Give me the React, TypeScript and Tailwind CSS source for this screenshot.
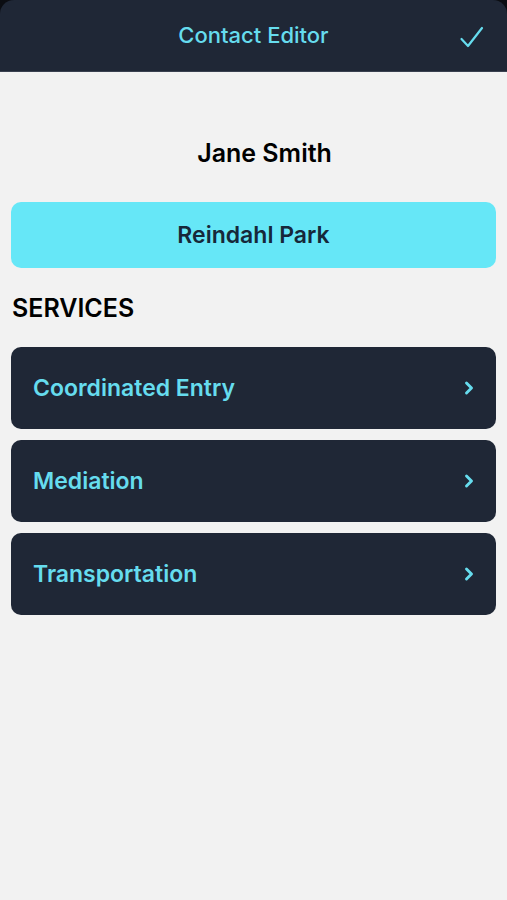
import { ChevronRight } from "lucide-react";

const services = ["Coordinated Entry", "Mediation", "Transportation"];

export default function App() {
  return (
    <div
      className="min-h-[900px] w-full bg-[#f2f2f2]"
      style={{ fontFamily: "Inter, 'Noto Sans', sans-serif" }}
    >
      <div className="bg-[#0b0d12]">
        <header className="relative flex h-[72px] items-center justify-center rounded-t-[14px] border-b border-[#3a4150] bg-[#1f2736]">
          <h1 className="text-[22px] font-medium text-[#66dcee]">Contact Editor</h1>
          <button className="absolute right-[22px] top-[25px] text-[#66dcee]">
            <svg width="26" height="26" viewBox="0 0 26 26" fill="none">
              <path
                d="M2.5 14 L9 21 L23 3"
                stroke="currentColor"
                strokeWidth="2.2"
                strokeLinecap="round"
                strokeLinejoin="round"
              />
            </svg>
          </button>
        </header>
      </div>

      <main className="flex flex-col px-[11px]">
        <div className="pl-[22px] pt-[66px] text-center text-[25px] font-semibold leading-[30px] text-black">
          Jane Smith
        </div>

        <button className="mt-[34px] flex h-[66px] items-center justify-center rounded-[10px] bg-[#66e7f7] text-[23px] font-semibold text-[#16283a]">
          Reindahl Park
        </button>

        <h2 className="mt-[25px] pl-[1px] text-[25px] font-semibold leading-[30px] text-black">
          SERVICES
        </h2>

        <div className="mt-[24px] flex flex-col gap-[11px]">
          {services.map((s) => (
            <div
              key={s}
              className="flex h-[82px] items-center justify-between rounded-[10px] bg-[#1f2736] pl-[22px] pr-[17px]"
            >
              <span className="text-[23px] font-semibold text-[#66dcee]">{s}</span>
              <ChevronRight className="h-[20px] w-[20px] text-[#66dcee]" strokeWidth={3.5} />
            </div>
          ))}
        </div>
      </main>
    </div>
  );
}
